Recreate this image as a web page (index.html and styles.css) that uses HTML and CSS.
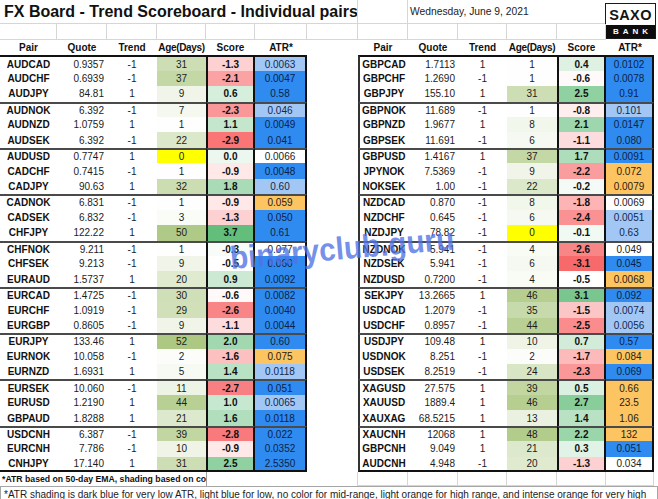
FILE: index.html
```html
<!DOCTYPE html>
<html lang="en">
<head>
<meta charset="utf-8">
<title>FX Board - Trend Scoreboard - Individual pairs</title>
<link rel="stylesheet" href="styles.css">
</head>
<body>
<div class="sheet">
  <div class="c title gl">FX Board - Trend Scoreboard - Individual pairs</div>
  <div class="c gl"></div>
  <div class="c date">Wednesday, June 9, 2021</div>
  <div class="logo">
    <div class="logo-top">SAXO</div>
    <div class="logo-bank">BANK</div>
  </div>

  <div class="c gl"></div><div class="c gl"></div><div class="c gl"></div><div class="c gl"></div>
  <div class="c gl"></div><div class="c gl"></div><div class="c gl"></div><div class="c gl"></div>
  <div class="c gl"></div><div class="c gl"></div><div class="c gl"></div><div class="c gl"></div>

  <div class="c hd">Pair</div>
  <div class="c hd">Quote</div>
  <div class="c hd">Trend</div>
  <div class="c hd age-hd">Age(Days)</div>
  <div class="c hd">Score</div>
  <div class="c hd">ATR*</div>
  <div class="c blank"></div>
  <div class="c hd">Pair</div>
  <div class="c hd">Quote</div>
  <div class="c hd">Trend</div>
  <div class="c hd age-hd">Age(Days)</div>
  <div class="c hd">Score</div>
  <div class="c hd">ATR*</div>
  <div class="c blank"></div>

  <div class="rows" id="rows"></div>

  <div class="c note1">*ATR based on 50-day EMA, shading based on co</div>
  <div class="c n1edge"></div>
  <div class="c blank"></div>
  <div class="c gl-r"></div>
  <div class="c gl"></div><div class="c gl"></div><div class="c gl"></div>
  <div class="c gl"></div><div class="c gl"></div><div class="c gl"></div>
  <div class="c blank"></div>

  <div class="c note2">*ATR shading is dark blue for very low ATR, light blue for low, no color for mid-range, light orange for high range, and intense orange for very high</div>
</div>
<div class="watermark">binaryclub.guru</div>
<script src="app.js"></script>
</body>
</html>
```

FILE: styles.css
```css
* {
  box-sizing: border-box;
  margin: 0;
  padding: 0;
}

html,
body {
  width: 658px;
  height: 499px;
  overflow: hidden;
  background: #ffffff;
}

body {
  position: relative;
  font-family: "Liberation Sans", Arial, sans-serif;
  color: #151515;
}

.sheet {
  display: grid;
  grid-template-columns: 57px 50px 50px 49px 49px 52px 51px 50px 50px 49px 50px 49px 48px 4px;
  grid-template-rows: 24px 15.5px 15.8px repeat(27, 15.45px) 14px 16px;
  font-size: 10px;
}

.rows {
  display: contents;
}

.c {
  display: flex;
  align-items: center;
  min-width: 0;
  overflow: hidden;
  white-space: nowrap;
  background: #ffffff;
}

.gl {
  border-right: 1px solid #d6d6d6;
  border-bottom: 1px solid #d6d6d6;
}

.gl-r {
  border-right: 1px solid #d6d6d6;
}

.title {
  grid-column: 1 / 8;
  font-size: 16px;
  font-weight: bold;
  padding-left: 4px;
  color: #111;
}

.date {
  grid-column: 9 / 13;
  padding-left: 2px;
  font-size: 10.3px;
  color: #222;
  border-bottom: 1px solid #d6d6d6;
}

.logo {
  grid-column: 13 / 15;
  grid-row: 1 / 3;
  align-self: start;
  margin-top: 3px;
  margin-left: -1px;
  width: 51px;
  height: 36px;
  border: 1px solid #1a1a1a;
  background: #ffffff;
  display: flex;
  flex-direction: column;
}

.logo-top {
  flex: 1;
  display: flex;
  align-items: center;
  justify-content: center;
  font-size: 14.5px;
  font-weight: bold;
  letter-spacing: 0.4px;
  color: #141414;
  padding-top: 1px;
}

.logo-bank {
  height: 13px;
  background: #0d0d0d;
  color: #ffffff;
  font-size: 8px;
  font-weight: bold;
  letter-spacing: 4px;
  padding-left: 4px;
  display: flex;
  align-items: center;
  justify-content: center;
}

.hd {
  justify-content: center;
  font-weight: bold;
  font-size: 10px;
  color: #111;
}

.age-hd {
  letter-spacing: -0.35px;
}

.pair {
  justify-content: center;
  font-weight: bold;
  color: #111;
}

.quote {
  justify-content: flex-end;
  padding-right: 3px;
  color: #1c1c1c;
}

.trend,
.age {
  justify-content: center;
  color: #1c1c1c;
}

.score {
  justify-content: center;
  font-weight: bold;
  color: #111;
  border-left: 2px solid #111;
  border-right: 2px solid #111;
}

.atr {
  justify-content: center;
  color: #1c1c1c;
  border-right: 2px solid #111;
}

.atr.dk {
  background: #2f8bef;
  color: #0c1f47;
}

.atr.lt {
  background: #a2c7f4;
  color: #13284f;
}

.atr.or {
  background: #fdc462;
  color: #2a2110;
}

.rp {
  border-left: 2px solid #333333;
}

.gs {
  border-top: 2px solid #4a4a4a;
}

.first {
  border-top: 2px solid #111111;
}

.last {
  border-bottom: 2px solid #111111;
}

.note1 {
  grid-column: 1 / 5;
  font-weight: bold;
  font-size: 8.7px;
  padding-left: 2px;
  color: #111;
}

.n1edge {
  border-left: 1px solid #a0a0a0;
}

.note2 {
  grid-column: 1 / -1;
  border: 1px solid #a6a6a6;
  border-bottom: none;
  font-size: 10px;
  padding-left: 3px;
  color: #1c1c1c;
}

.watermark {
  position: absolute;
  left: 231px;
  top: 242px;
  font-size: 32px;
  line-height: 1;
  font-weight: bold;
  color: rgba(80, 115, 228, 0.8);
  transform-origin: 0 27px;
  transform: rotate(-5deg) scaleX(0.93);
  white-space: nowrap;
  pointer-events: none;
}
```

FILE: app.js
```js
const L = [
  ["AUDCAD", "0.9357", -1, 31, "-1.3", "0.0063", "lt"],
  ["AUDCHF", "0.6939", -1, 37, "-2.1", "0.0047", "dk"],
  ["AUDJPY", "84.81", 1, 9, "0.6", "0.58", "dk"],
  ["AUDNOK", "6.392", -1, 7, "-2.3", "0.046", "lt"],
  ["AUDNZD", "1.0759", 1, 1, "1.1", "0.0049", "dk"],
  ["AUDSEK", "6.392", -1, 22, "-2.9", "0.041", "dk"],
  ["AUDUSD", "0.7747", 1, 0, "0.0", "0.0066", "no"],
  ["CADCHF", "0.7415", -1, 1, "-0.9", "0.0048", "dk"],
  ["CADJPY", "90.63", 1, 32, "1.8", "0.60", "lt"],
  ["CADNOK", "6.831", -1, 1, "-0.9", "0.059", "or"],
  ["CADSEK", "6.832", -1, 3, "-1.3", "0.050", "dk"],
  ["CHFJPY", "122.22", 1, 50, "3.7", "0.61", "dk"],
  ["CHFNOK", "9.211", -1, 1, "-0.3", "0.077", "no"],
  ["CHFSEK", "9.213", -1, 9, "-0.5", "0.060", "dk"],
  ["EURAUD", "1.5737", 1, 20, "0.9", "0.0092", "dk"],
  ["EURCAD", "1.4725", -1, 30, "-0.6", "0.0082", "dk"],
  ["EURCHF", "1.0919", -1, 29, "-2.6", "0.0040", "dk"],
  ["EURGBP", "0.8605", -1, 9, "-1.1", "0.0044", "dk"],
  ["EURJPY", "133.46", 1, 52, "2.0", "0.60", "dk"],
  ["EURNOK", "10.058", -1, 2, "-1.6", "0.075", "or"],
  ["EURNZD", "1.6931", 1, 5, "1.4", "0.0118", "lt"],
  ["EURSEK", "10.060", -1, 11, "-2.7", "0.051", "dk"],
  ["EURUSD", "1.2190", 1, 44, "1.0", "0.0065", "lt"],
  ["GBPAUD", "1.8288", 1, 21, "1.6", "0.0118", "dk"],
  ["USDCNH", "6.387", -1, 39, "-2.8", "0.022", "dk"],
  ["EURCNH", "7.786", -1, 10, "-0.9", "0.0352", "dk"],
  ["CNHJPY", "17.140", 1, 31, "2.5", "2.5350", "dk"]
];

const R = [
  ["GBPCAD", "1.7113", 1, 1, "0.4", "0.0102", "dk"],
  ["GBPCHF", "1.2690", -1, 1, "-0.6", "0.0078", "dk"],
  ["GBPJPY", "155.10", 1, 31, "2.5", "0.91", "dk"],
  ["GBPNOK", "11.689", -1, 1, "-0.8", "0.101", "lt"],
  ["GBPNZD", "1.9677", 1, 8, "2.1", "0.0147", "dk"],
  ["GBPSEK", "11.691", -1, 6, "-1.1", "0.080", "dk"],
  ["GBPUSD", "1.4167", 1, 37, "1.7", "0.0091", "dk"],
  ["JPYNOK", "7.5369", -1, 9, "-2.2", "0.072", "or"],
  ["NOKSEK", "1.00", -1, 22, "-0.2", "0.0079", "or"],
  ["NZDCAD", "0.870", -1, 8, "-1.8", "0.0069", "no"],
  ["NZDCHF", "0.645", -1, 6, "-2.4", "0.0051", "lt"],
  ["NZDJPY", "78.82", -1, 0, "-0.1", "0.63", "lt"],
  ["NZDNOK", "5.941", -1, 4, "-2.6", "0.049", "no"],
  ["NZDSEK", "5.941", -1, 6, "-3.1", "0.045", "dk"],
  ["NZDUSD", "0.7200", -1, 4, "-0.5", "0.0068", "or"],
  ["SEKJPY", "13.2665", 1, 46, "3.1", "0.092", "dk"],
  ["USDCAD", "1.2079", -1, 35, "-1.5", "0.0074", "lt"],
  ["USDCHF", "0.8957", -1, 44, "-2.5", "0.0056", "lt"],
  ["USDJPY", "109.48", 1, 10, "0.7", "0.57", "dk"],
  ["USDNOK", "8.251", -1, 2, "-1.7", "0.084", "or"],
  ["USDSEK", "8.2519", -1, 24, "-2.3", "0.069", "dk"],
  ["XAGUSD", "27.575", 1, 39, "0.5", "0.66", "or"],
  ["XAUUSD", "1889.4", 1, 46, "2.7", "23.5", "or"],
  ["XAUXAG", "68.5215", 1, 13, "1.4", "1.06", "or"],
  ["XAUCNH", "12068", 1, 48, "2.2", "132", "or"],
  ["GBPCNH", "9.049", 1, 21, "0.3", "0.051", "dk"],
  ["AUDCNH", "4.948", -1, 20, "-1.3", "0.034", "no"]
];

const rows = document.getElementById("rows");

function mix(t, c) {
  t = Math.max(0, Math.min(1, t));
  const ch = (i) => Math.round(255 + (c[i] - 255) * t);
  return "rgb(" + ch(0) + "," + ch(1) + "," + ch(2) + ")";
}

function scoreBg(v) {
  const mid = -0.5, min = -3.1, max = 3.7;
  if (v < mid) return mix((mid - v) / (mid - min), [248, 105, 107]);
  return mix((v - mid) / (max - mid), [99, 190, 123]);
}

function ageBg(v) {
  if (v === 0) return "#ffff00";
  return mix(v / 52, [172, 200, 130]);
}

function cell(cls, text, bg) {
  const d = document.createElement("div");
  d.className = "c " + cls;
  d.textContent = text;
  if (bg) d.style.background = bg;
  rows.appendChild(d);
}

for (let i = 0; i < 27; i++) {
  let ext = "";
  if (i === 0) ext += " first";
  else if (i % 3 === 0) ext += " gs";
  if (i === 26) ext += " last";
  [L[i], R[i]].forEach((r, k) => {
    cell("pair" + ext + (k ? " rp" : ""), r[0]);
    cell("quote" + ext, r[1]);
    cell("trend" + ext, String(r[2]));
    cell("age" + ext, String(r[3]), ageBg(r[3]));
    cell("score" + ext, r[4], scoreBg(parseFloat(r[4])));
    cell("atr " + r[6] + ext, r[5]);
    cell("blank", "");
  });
}
```
